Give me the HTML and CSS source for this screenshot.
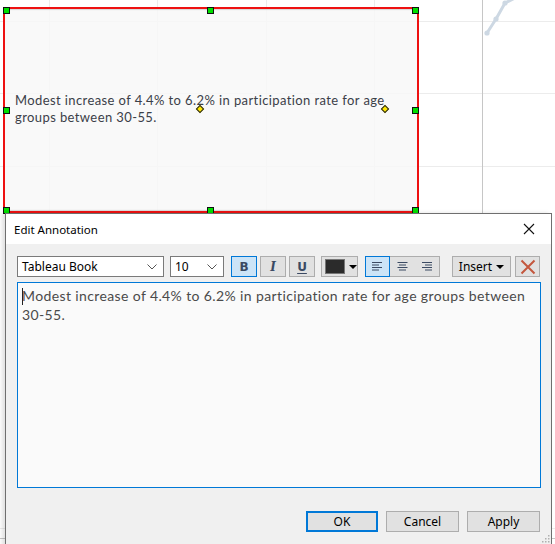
FILE: index.html
```html
<!DOCTYPE html>
<html>
<head>
<meta charset="utf-8">
<link rel="stylesheet" href="styles.css">
</head>
<body>
<div class="canvas">
  <svg class="chart" width="555" height="544" viewBox="0 0 555 544">
    <g class="grid-h">
      <line x1="0" y1="21.5" x2="555" y2="21.5"/>
      <line x1="0" y1="93.5" x2="555" y2="93.5"/>
      <line x1="0" y1="166.5" x2="555" y2="166.5"/>
      <line x1="0" y1="528.5" x2="555" y2="528.5"/>
    </g>
    <g class="grid-v">
      <line x1="49.5" y1="0" x2="49.5" y2="544"/>
      <line x1="157.5" y1="0" x2="157.5" y2="544"/>
      <line x1="266.5" y1="0" x2="266.5" y2="544"/>
      <line x1="374.5" y1="0" x2="374.5" y2="544"/>
    </g>
    <line class="axis" x1="482.5" y1="0" x2="482.5" y2="544"/>
    <line class="axis" x1="0" y1="538.5" x2="555" y2="538.5"/>
    <polyline class="series" points="487,33 496,19 505,3 515,-2"/>
    <circle class="dot" cx="487" cy="33" r="2.6"/>
    <circle class="dot" cx="496" cy="19" r="2.6"/>
    <circle class="dot" cx="505" cy="3" r="2.6"/>
  </svg>

  <div class="annotation">
    <p class="annotation-text">Modest increase of 4.4% to 6.2% in participation rate for age groups between 30-55.</p>
  </div>
  <span class="handle h-tl"></span>
  <span class="handle h-tm"></span>
  <span class="handle h-tr"></span>
  <span class="handle h-ml"></span>
  <span class="handle h-mr"></span>
  <span class="handle h-bl"></span>
  <span class="handle h-bm"></span>
  <span class="handle h-br"></span>
  <span class="diamond d1"></span>
  <span class="diamond d2"></span>

  <div class="dialog">
    <div class="titlebar">
      <span class="title">Edit Annotation</span>
      <span class="close">
        <svg width="12" height="12" viewBox="0 0 12 12"><path d="M1 1 L11 11 M11 1 L1 11" stroke="#111" stroke-width="1.1" fill="none"/></svg>
      </span>
    </div>
    <div class="dialog-body">
      <div class="toolbar">
        <div class="select font-select">
          <span>Tableau Book</span>
          <svg class="chev" width="10" height="6" viewBox="0 0 10 6"><path d="M0.5 0.5 L5 5 L9.5 0.5" stroke="#555" stroke-width="1" fill="none"/></svg>
        </div>
        <div class="select size-select">
          <span>10</span>
          <svg class="chev" width="10" height="6" viewBox="0 0 10 6"><path d="M0.5 0.5 L5 5 L9.5 0.5" stroke="#555" stroke-width="1" fill="none"/></svg>
        </div>
        <div class="btn fmt active first-fmt"><b class="g-b">B</b></div>
        <div class="btn fmt"><i class="g-i">I</i></div>
        <div class="btn fmt"><u class="g-u">U</u></div>
        <div class="btn color-btn">
          <span class="swatch"></span>
          <span class="caret-down"></span>
        </div>
        <div class="align-group">
          <div class="align active">
            <svg width="11" height="9" viewBox="0 0 11 9"><path d="M0 0.5 H10 M0 3 H7 M0 5.5 H10 M0 8 H7" stroke="#3b4a63" stroke-width="1"/></svg>
          </div>
          <div class="align">
            <svg width="11" height="9" viewBox="0 0 11 9"><path d="M0.5 0.5 H10.5 M2 3 H9 M0.5 5.5 H10.5 M2 8 H9" stroke="#3b4a63" stroke-width="1"/></svg>
          </div>
          <div class="align">
            <svg width="11" height="9" viewBox="0 0 11 9"><path d="M1 0.5 H11 M4 3 H11 M1 5.5 H11 M4 8 H11" stroke="#3b4a63" stroke-width="1"/></svg>
          </div>
        </div>
        <div class="btn insert-btn">Insert <span class="caret-down"></span></div>
        <div class="btn delete-btn">
          <svg width="16" height="16" viewBox="0 0 16 16"><path d="M1.5 1.5 L14.5 14.5 M14.5 1.5 L1.5 14.5" stroke="#c4573e" stroke-width="2" fill="none"/></svg>
        </div>
      </div>
      <div class="editor">
        <p class="editor-text"><span class="cursor"></span>Modest increase of 4.4% to 6.2% in participation rate for age groups between 30-55.</p>
      </div>
      <div class="footer">
        <div class="btn dlg-btn default">OK</div>
        <div class="btn dlg-btn">Cancel</div>
        <div class="btn dlg-btn">Apply</div>
      </div>
    </div>
    <svg class="grip" width="9" height="9" viewBox="0 0 9 9">
      <rect x="7" y="1" width="1.5" height="1.5"/>
      <rect x="4" y="4" width="1.5" height="1.5"/>
      <rect x="7" y="4" width="1.5" height="1.5"/>
      <rect x="1" y="7" width="1.5" height="1.5"/>
      <rect x="4" y="7" width="1.5" height="1.5"/>
      <rect x="7" y="7" width="1.5" height="1.5"/>
    </svg>
  </div>
</div>
</body>
</html>
```
FILE: styles.css
```css
* { box-sizing: border-box; }
html, body { margin: 0; padding: 0; }
body {
  width: 555px;
  height: 544px;
  overflow: hidden;
  background: #fff;
  font-family: "Noto Sans", "Liberation Sans", sans-serif;
}
.canvas {
  position: relative;
  width: 555px;
  height: 544px;
  overflow: hidden;
}
.chart { position: absolute; left: 0; top: 0; }
.grid-h line { stroke: #ececec; stroke-width: 1; }
.grid-v line { stroke: #ececec; stroke-width: 1; }
.axis { stroke: #c6c6c6; stroke-width: 1; }
.series { fill: none; stroke: #cdd8e3; stroke-width: 3; stroke-linejoin: round; }
.dot { fill: #cdd8e3; }

.annotation {
  position: absolute;
  left: 3px;
  top: 7px;
  width: 416px;
  height: 206px;
  border: 2px solid #ee1111;
  background: rgba(248, 248, 248, 0.82);
  box-shadow: inset 0 2px 1px -1px #d8d8d8, inset 0 -2px 1px -1px #d8d8d8;
  display: flex;
  align-items: center;
  padding: 0 10px 2px 10px;
}
.annotation-text {
  margin: 0;
  font-family: Lato, sans-serif;
  font-size: 13px;
  letter-spacing: 0.4px;
  line-height: 17px;
  color: #3b4048;
  width: 392px;
}

.handle {
  position: absolute;
  width: 7px;
  height: 7px;
  background: #00e000;
  border: 1px solid #111;
}
.h-tl { left: 3px; top: 7px; }
.h-tm { left: 207px; top: 7px; }
.h-tr { left: 412px; top: 7px; }
.h-ml { left: 3px; top: 107px; }
.h-mr { left: 412px; top: 107px; }
.h-bl { left: 3px; top: 207px; }
.h-bm { left: 207px; top: 207px; }
.h-br { left: 412px; top: 207px; }

.diamond {
  position: absolute;
  width: 6px;
  height: 6px;
  background: #ffe800;
  border: 1px solid #222;
  transform: rotate(45deg);
}
.d1 { left: 197px; top: 106px; }
.d2 { left: 382px; top: 106px; }

.dialog {
  position: absolute;
  left: 5px;
  top: 213px;
  width: 547px;
  height: 345px;
  border: 1px solid #6f6f6f;
  background: #f0f0f0;
  box-shadow: -3px 0 4px rgba(0,0,0,0.12);
  display: flex;
  flex-direction: column;
}
.titlebar {
  height: 30px;
  background: #fff;
  display: flex;
  align-items: center;
  justify-content: space-between;
  padding: 0 10px 0 8px;
}
.title {
  font-size: 11.5px;
  color: #000;
}
.close { display: flex; width: 12px; height: 12px; margin-right: 6px; }

.dialog-body {
  padding: 12px 10px 0 11px;
  display: flex;
  flex-direction: column;
}
.toolbar {
  display: flex;
  align-items: center;
  height: 21px;
}
.select {
  height: 21px;
  background: #fff;
  border: 1px solid #7a7a7a;
  display: flex;
  align-items: center;
  justify-content: space-between;
  padding: 0 6px 0 4px;
  font-size: 12px;
  color: #000;
}
.font-select { width: 147px; }
.size-select { width: 54px; margin-left: 6px; }
.chev { display: block; }

.btn {
  height: 21px;
  background: #e1e1e1;
  border: 1px solid #adadad;
  display: flex;
  align-items: center;
  justify-content: center;
  font-size: 12px;
  color: #000;
}
.fmt { width: 26px; margin-left: 3px; }
.first-fmt { margin-left: 7px; }
.btn.active, .align.active {
  background: #cce4f7;
  border: 1px solid #0078d7;
}
.g-b, .g-i, .g-u {
  font-family: "DejaVu Sans", sans-serif;
  font-size: 12px;
  color: #3b4a63;
  font-weight: bold;
  line-height: 1;
}
.g-i { font-family: "DejaVu Serif", serif; font-style: italic; }
.g-u { text-decoration: underline; text-underline-offset: 2px; font-weight: 600; }

.color-btn {
  width: 37px;
  margin-left: 6px;
  justify-content: flex-start;
  padding-left: 3px;
}
.swatch {
  width: 21px;
  height: 15px;
  background: #2b2b2b;
  border: 1px solid #777;
}
.caret-down {
  width: 0;
  height: 0;
  border-left: 4px solid transparent;
  border-right: 4px solid transparent;
  border-top: 4px solid #000;
  display: inline-block;
}
.color-btn .caret-down { margin-left: 4px; }

.align-group {
  margin-left: 7px;
  width: 75px;
  height: 21px;
  display: flex;
  border: 1px solid #adadad;
  background: #e1e1e1;
}
.align {
  flex: 1;
  display: flex;
  align-items: center;
  justify-content: center;
  border: 1px solid transparent;
}
.align.active { margin: -1px 0 -1px -1px; }
.align svg { display: block; }

.insert-btn {
  width: 59px;
  margin-left: 12px;
  gap: 4px;
}
.delete-btn {
  width: 25px;
  margin-left: 4px;
}

.editor {
  margin-top: 5px;
  width: 524px;
  height: 206px;
  border: 1px solid #0078d7;
  background: #fafafa;
  padding: 3px 10px 0 4px;
}
.editor-text {
  margin: 0;
  font-family: Lato, sans-serif;
  font-size: 14px;
  letter-spacing: 0.38px;
  line-height: 19px;
  color: #4a4a4a;
}
.cursor {
  display: inline-block;
  width: 1px;
  height: 17px;
  background: #222;
  vertical-align: -4px;
  margin-right: -1px;
}

.footer {
  display: flex;
  justify-content: flex-end;
  gap: 8px;
  margin-top: 23px;
  padding-right: 1px;
}
.dlg-btn {
  width: 73px;
  height: 21px;
}
.dlg-btn.default {
  border: 2px solid #0078d7;
  width: 72px;
}
.grip {
  position: absolute;
  right: 1px;
  top: 320px;
  fill: #b0b0b0;
}
```
